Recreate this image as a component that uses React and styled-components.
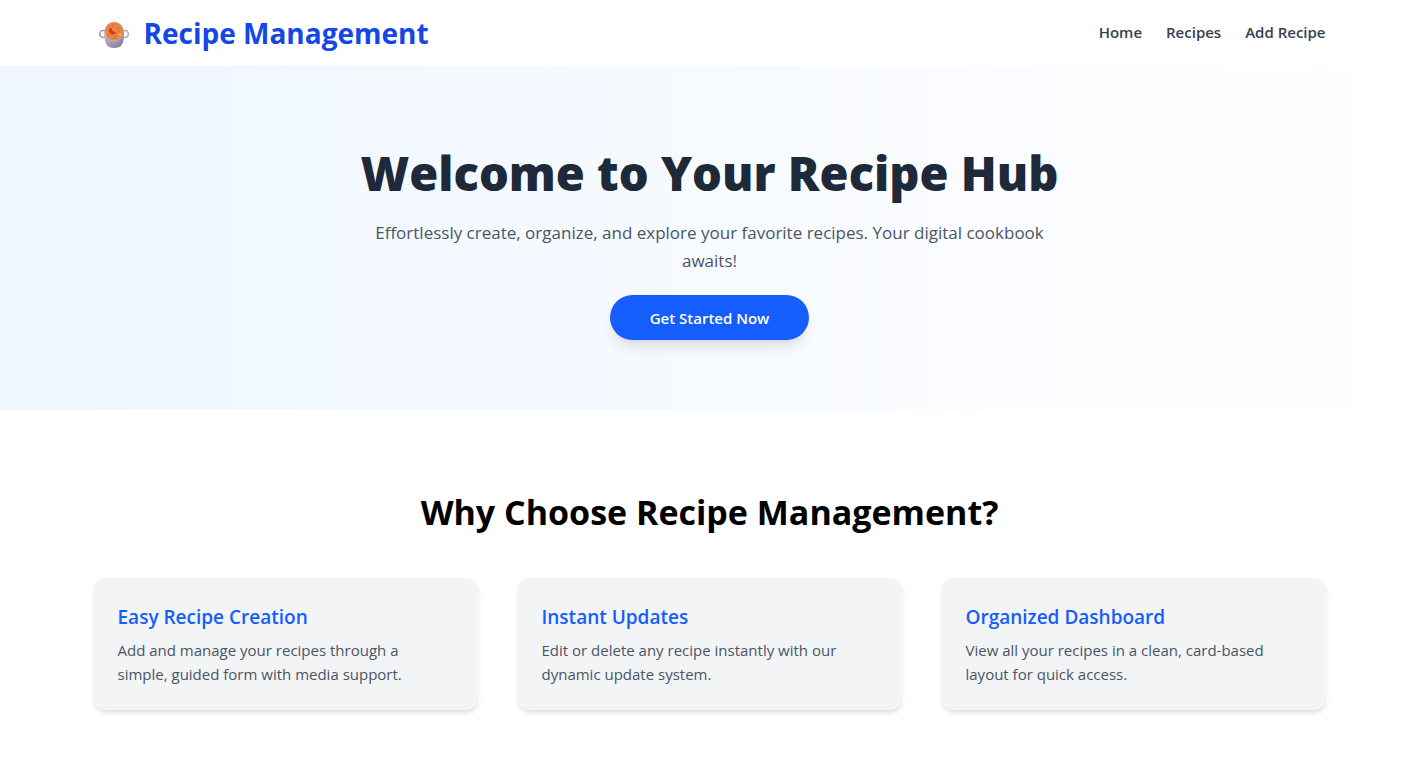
import React from "react";
import styled, { createGlobalStyle } from "styled-components";

const GlobalStyle = createGlobalStyle`
  *, *::before, *::after { box-sizing: border-box; }
  body {
    margin: 0;
    background: #ffffff;
    color: #000000;
    font-family: "Segoe UI", "Open Sans", "Noto Sans", sans-serif;
    font-size: 16px;
    line-height: 24px;
  }
  h1, h2, h3, p { margin: 0; }
  a { color: inherit; text-decoration: none; }
`;

const Container = styled.div`
  max-width: 1280px;
  margin: 0 auto;
  padding: 0 24px;
`;

const Header = styled.header`
  background: #ffffff;
`;

const HeaderRow = styled(Container)`
  display: flex;
  align-items: center;
  justify-content: space-between;
  min-height: 66px;
`;

const Brand = styled.a`
  display: flex;
  align-items: center;
  gap: 10px;
  color: #1447e6;
  font-size: 28px;
  font-weight: 700;
  line-height: 36px;
`;

const Nav = styled.nav`
  display: flex;
  gap: 24px;
  padding-bottom: 2px;
`;

const NavLink = styled.a`
  color: #364153;
  font-size: 15px;
  font-weight: 600;
`;

const Hero = styled.section`
  padding: 80px 24px 70px;
  background: linear-gradient(to right in oklab, #eff6ff, #ffffff);
  text-align: center;
`;

const HeroTitle = styled.h1`
  margin-bottom: 19px;
  color: #1e2939;
  font-size: 47px;
  font-weight: 800;
  line-height: 54px;
`;

const HeroText = styled.p`
  max-width: 700px;
  margin: 0 auto 20px;
  color: #4a5565;
  font-size: 17px;
  line-height: 28px;
`;

const HeroAction = styled.a`
  display: inline-block;
  padding: 11px 40px 10px;
  border-radius: 24px;
  background: #155dfc;
  box-shadow: 0 10px 15px -3px rgba(0, 0, 0, 0.1), 0 4px 6px -4px rgba(0, 0, 0, 0.1);
  color: #ffffff;
  font-size: 15px;
  font-weight: 600;
  vertical-align: top;
`;

const Features = styled.section`
  padding: 80px 0;
`;

const FeaturesTitle = styled.h2`
  margin-bottom: 44px;
  font-size: 34px;
  font-weight: 700;
  line-height: 44px;
  text-align: center;
`;

const CardGrid = styled.div`
  display: grid;
  grid-template-columns: repeat(auto-fit, minmax(280px, 1fr));
  gap: 40px;
`;

const Card = styled.article`
  padding: 24px;
  border-radius: 12px;
  background: #f3f4f6;
  box-shadow: 0 4px 6px -1px rgba(0, 0, 0, 0.1), 0 2px 4px -2px rgba(0, 0, 0, 0.1);
`;

const CardTitle = styled.h3`
  margin-bottom: 6px;
  color: #155dfc;
  font-size: 19px;
  font-weight: 600;
  line-height: 30px;
`;

const CardText = styled.p`
  max-width: 320px;
  color: #4a5565;
  font-size: 15px;
`;

function SoupPot() {
  return (
    <svg width="40" height="40" viewBox="0 0 40 40" aria-hidden="true">
      <defs>
        <linearGradient id="pot" x1="0" x2="1" y1="0" y2="1">
          <stop offset="0" stopColor="#c3bccb" />
          <stop offset="0.5" stopColor="#a89bb8" />
          <stop offset="1" stopColor="#7d6e96" />
        </linearGradient>
      </defs>
      <ellipse cx="9.2" cy="21" rx="3.4" ry="3.5" fill="none" stroke="#a49cae" strokeWidth="1.7" />
      <ellipse cx="31" cy="21" rx="3.4" ry="3.5" fill="none" stroke="#b3acbc" strokeWidth="1.7" />
      <path d="M10.2 19 C10.2 27 11.5 31.5 14.5 33.7 Q20.2 36.4 25.9 33.7 C28.9 31.5 30.2 27 30.2 19 Z" fill="url(#pot)" />
      <circle cx="20.2" cy="18.6" r="9.8" fill="#b4abbd" />
      <circle cx="20.2" cy="18.5" r="8.9" fill="#ff7a3c" />
      <path d="M15.2 16 q-.8 3.2 1.6 4.8 q2.6 1.6 4.6 -.2 q1.2 -1.6 -.6 -2 q-1.8 .5 -2.4 -1 q-.2 -2.4 -1.6 -2.6 q-1.2 0 -1.6 1z" fill="#a2532d" />
      <path d="M21.6 15.6 q1.3 -1.9 3.4 -1.6 q1.8 .5 2.2 2.3 q-2.6 .9 -5.6 -.7z" fill="#6fb44a" />
      <path d="M17.6 25.6 q2.3 -2.6 4.8 .1 q-2.4 1.2 -4.8 -.1z" fill="#6fab4a" />
      <path d="M23 21.4 l3.8 -1.2 .2 2.4z" fill="#ffd03d" />
      <g fill="#e45a28">
        <circle cx="18.8" cy="12.6" r=".9" />
        <circle cx="14.6" cy="22.3" r=".9" />
        <circle cx="24.6" cy="18.4" r=".8" />
        <circle cx="22" cy="23.4" r=".7" />
      </g>
    </svg>
  );
}

const features = [
  {
    title: "Easy Recipe Creation",
    text: "Add and manage your recipes through a simple, guided form with media support.",
  },
  {
    title: "Instant Updates",
    text: "Edit or delete any recipe instantly with our dynamic update system.",
  },
  {
    title: "Organized Dashboard",
    text: "View all your recipes in a clean, card-based layout for quick access.",
  },
];

export default function App() {
  return (
    <>
      <GlobalStyle />
      <Header>
        <HeaderRow>
          <Brand href="#home">
            <SoupPot />
            Recipe Management
          </Brand>
          <Nav aria-label="Main">
            <NavLink href="#home">Home</NavLink>
            <NavLink href="#recipes">Recipes</NavLink>
            <NavLink href="#add">Add Recipe</NavLink>
          </Nav>
        </HeaderRow>
      </Header>
      <main>
        <Hero>
          <HeroTitle>Welcome to Your Recipe Hub</HeroTitle>
          <HeroText>
            Effortlessly create, organize, and explore your favorite recipes. Your digital cookbook awaits!
          </HeroText>
          <HeroAction href="#recipes">Get Started Now</HeroAction>
        </Hero>
        <Features>
          <Container>
            <FeaturesTitle>Why Choose Recipe Management?</FeaturesTitle>
            <CardGrid>
              {features.map((feature) => (
                <Card key={feature.title}>
                  <CardTitle>{feature.title}</CardTitle>
                  <CardText>{feature.text}</CardText>
                </Card>
              ))}
            </CardGrid>
          </Container>
        </Features>
      </main>
    </>
  );
}
